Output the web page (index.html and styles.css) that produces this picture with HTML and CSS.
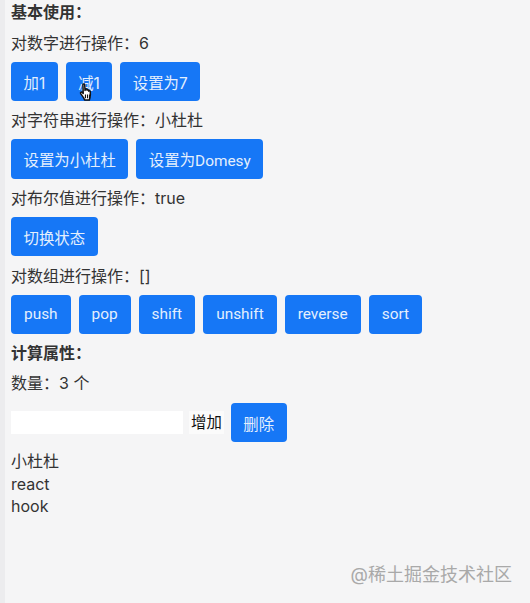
FILE: index.html
```html
<!DOCTYPE html>
<html lang="zh-CN">
<head>
<meta charset="UTF-8">
<meta name="viewport" content="width=device-width, initial-scale=1.0">
<title>基本使用</title>
<link rel="stylesheet" href="styles.css">
</head>
<body>

  <div class="title">基本使用：</div>

  <div class="line first">对数字进行操作：6</div>
  <div class="btn-row row-num">
    <button class="btn">加1</button>
    <span class="btn-wrap">
      <button class="btn">减1</button>
      <svg class="cursor" viewBox="0 0 14 18" width="15" height="19">
        <path d="M3.6 1.6c0-.9 1.600-.9 1.700 0l.3 5.400.4-1.100c.5-.7 1.500-.3 1.400.4l.1.500c.4-.7 1.500-.4 1.500.4l.1.500c.5-.6 1.500-.3 1.500.5.2 2.300.2 4.300-.4 5.800l-.5 2.100H5.200l-.7-1.700-3-4.300c-.6-1 .6-2 1.500-1.200l.9 1z" fill="#fff" stroke="#111" stroke-width="1.400" stroke-linejoin="round"/>
        <path d="M6 11v3.500M8 11v3.500M10 11v3.500" fill="none" stroke="#111" stroke-width="1.100"/>
      </svg>
    </span>
    <button class="btn">设置为7</button>
  </div>

  <div class="line">对字符串进行操作：小杜杜</div>
  <div class="btn-row row-tall">
    <button class="btn">设置为小杜杜</button>
    <button class="btn">设置为Domesy</button>
  </div>

  <div class="line">对布尔值进行操作：true</div>
  <div class="btn-row">
    <button class="btn">切换状态</button>
  </div>

  <div class="line">对数组进行操作：[]</div>
  <div class="btn-row row-latin">
    <button class="btn">push</button>
    <button class="btn">pop</button>
    <button class="btn">shift</button>
    <button class="btn">unshift</button>
    <button class="btn">reverse</button>
    <button class="btn">sort</button>
  </div>

  <div class="title second">计算属性：</div>
  <div class="line count">数量：3 个</div>

  <div class="add-row">
    <input class="add-input" type="text">
    <span class="add-label">增加</span>
    <button class="btn">删除</button>
  </div>

  <div class="list">
    <div>小杜杜</div>
    <div>react</div>
    <div>hook</div>
  </div>

  <div class="watermark">@稀土掘金技术社区</div>

</body>
</html>
```

FILE: styles.css
```css
html, body {
  height: 100%;
}

body {
  margin: 0;
  padding: 1px 0 0 11px;
  box-sizing: border-box;
  height: 603px;
  overflow: hidden;
  position: relative;
  background-color: #f5f5f6;
  box-shadow: inset 5px 0 0 #ececee;
  color: #333;
  font-family: Inter, "Noto Sans CJK SC", sans-serif;
  font-size: 16px;
  line-height: 23px;
}

.title {
  font-weight: 700;
  height: 23px;
}

.second {
  margin-top: 5.500px;
}

.line {
  height: 23px;
  margin-top: 8px;
}

.first {
  margin-top: 8px;
}

.count {
  margin-top: 7px;
}

.btn-row {
  display: flex;
  gap: 8px;
  margin-top: 7px;
  margin-bottom: 8.500px;
}

.row-num {
  margin-bottom: 8px;
}

.row-tall {
  margin-bottom: 8px;
}

.btn-wrap {
  position: relative;
  display: flex;
}

.btn {
  height: 39px;
  padding: 0 12.500px;
  border: 0;
  border-radius: 4px;
  background-color: #1677f6;
  color: #e4effd;
  font-family: Roboto, "Noto Sans CJK SC", sans-serif;
  font-size: 15.400px;
  white-space: nowrap;
}

.row-num .btn {
  font-family: Inter, "Noto Sans CJK SC", sans-serif;
}

.row-latin .btn {
  padding: 0 13px;
}

.row-tall .btn {
  height: 40px;
}

.cursor {
  position: absolute;
  left: 13px;
  top: 21px;
}

.add-row {
  display: flex;
  align-items: center;
  margin-top: 8px;
}

.add-input {
  width: 172px;
  height: 23px;
  padding: 0;
  border: 0;
  background-color: #fff;
  outline: none;
}

.add-label {
  padding: 0 2px;
  margin-left: 6px;
  margin-right: 7px;
  background-color: #fbfbfb;
  color: #111;
  font-size: 15.400px;
}

.list {
  margin-top: 8px;
  line-height: 22.500px;
}

.watermark {
  position: absolute;
  right: 18px;
  top: 563px;
  color: #a9a9a9;
  font-size: 18px;
  line-height: 24px;
}
```
